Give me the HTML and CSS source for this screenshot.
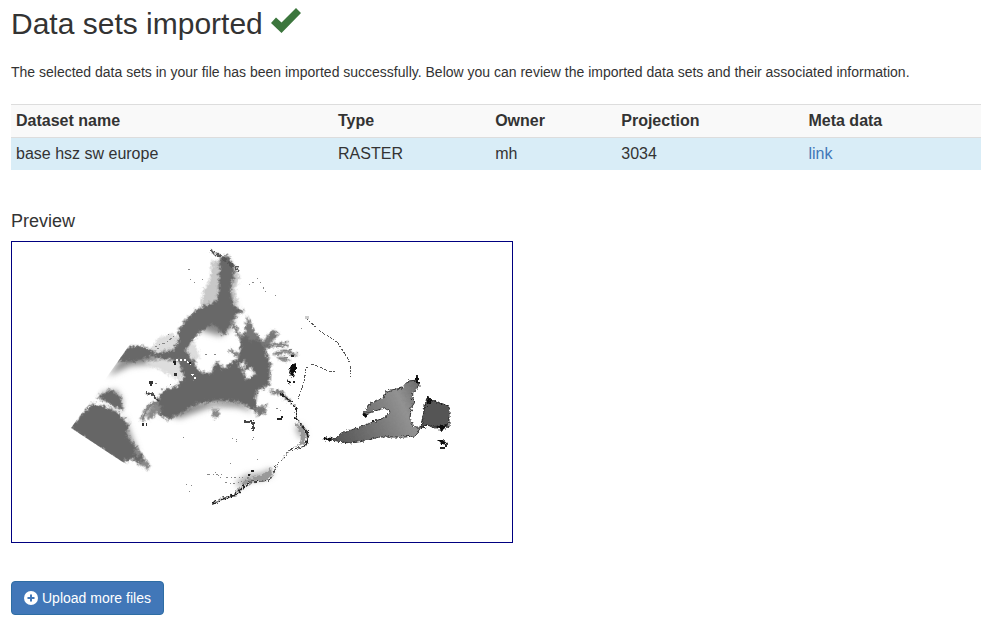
FILE: index.html
```html
<!DOCTYPE html>
<html lang="en">
<head>
<meta charset="utf-8">
<title>Data sets imported</title>
<link rel="stylesheet" href="styles.css">
</head>
<body>
<main class="page">
  <h1 class="title">Data sets imported
    <svg class="check" viewBox="0 0 30 26" aria-hidden="true"><path d="M0 15 5 9.500 10.500 14.500 25 0 30 5 10.500 25Z"/></svg>
  </h1>
  <p class="intro">The selected data sets in your file has been imported successfully. Below you can review the imported data sets and their associated information.</p>
  <table class="datasets">
    <thead>
      <tr><th class="col-name">Dataset name</th><th class="col-type">Type</th><th class="col-owner">Owner</th><th class="col-projection">Projection</th><th>Meta data</th></tr>
    </thead>
    <tbody>
      <tr><td>base hsz sw europe</td><td>RASTER</td><td>mh</td><td>3034</td><td><a href="#">link</a></td></tr>
    </tbody>
  </table>
  <h2 class="subtitle">Preview</h2>
  <svg class="preview" viewBox="12 242 500 300" role="img" aria-label="Raster preview">
    <defs>
      <filter id="rough" x="-5%" y="-5%" width="110%" height="110%"><feGaussianBlur stdDeviation=".8" result="b"/><feTurbulence type="fractalNoise" baseFrequency=".3" numOctaves="2" seed="4" result="n"/><feDisplacementMap in="b" in2="n" scale="6" xChannelSelector="R" yChannelSelector="G"/></filter>
      <filter id="soft" x="-20%" y="-20%" width="140%" height="140%"><feGaussianBlur stdDeviation="3"/></filter>
      <filter id="edge" x="-5%" y="-5%" width="110%" height="110%"><feTurbulence type="fractalNoise" baseFrequency=".4" numOctaves="2" seed="8" result="n"/><feDisplacementMap in="SourceGraphic" in2="n" scale="5" xChannelSelector="R" yChannelSelector="G"/></filter>
      <linearGradient id="island" x1="330" y1="435" x2="425" y2="390" gradientUnits="userSpaceOnUse"><stop offset="0" stop-color="#555"/><stop offset=".45" stop-color="#777"/><stop offset=".75" stop-color="#929292"/><stop offset="1" stop-color="#666"/></linearGradient>
      <clipPath id="extent"><path d="M71 428 128 347 209 246H512V542H260L121 461Z"/></clipPath>
    </defs>
    <g clip-path="url(#extent)">
      <g filter="url(#soft)" fill="#888">
        <path d="M108 376 128 349 162 356 180 345 190 365 160 363 130 366Z"/>
        <path d="M159 413 197 402 240 399 253 412 238 407 213 406 180 418Z"/>
        <path d="M212 303H236L231 328 220 336 200 330ZM124 416 138 454 121 446ZM100 394 116 390 122 400 120 414Z"/>
      </g>
      <g filter="url(#rough)">
        <path fill="#c8c8c8" d="M212 260 223 262 222 299 201 306 204 289 210 280ZM230 268 240 275 235 291 238 304 227 305Z"/>
        <path fill="#ddd" d="M158 338 173 333 183 340 178 348 163 352 150 351ZM183 350 195 342 200 358 190 364ZM144 363 162 359 178 362 184 370 180 381 160 370Z"/>
        <path fill="#666" d="M69 428 92 403 106 406 119 411 129 422 127 436 134 444 141 452 149 466 140 465 132 459 121 463Z"/>
        <path fill="#686868" d="M97 397 110 389 121 397 123 413 109 406Z"/>
        <path fill="#686868" d="M117 361 128 346 142 346 158 353 173 349 178 342 178 331 186 319 200 307 216 301 218 292 220 256 229 256 235 270 231 290 234 306 242 310 235 317 224 336 214 324 203 330 194 339 186 350 194 362 196 374 184 378 178 360 161 359 151 356 134 362Z"/>
        <path fill="#666" d="M157 412 158 400 163 390 177 386 184 377 182 367 193 358 197 368 203 373 211 373 216 361 224 368 232 362 238 358 240 347 243 333 256 333 265 345 267 354 271 364 269 386 258 390 256 400 257 412 246 406 238 402 217 401 197 404 180 414 168 420Z"/>
        <path fill="#777" d="M247 315 254 330 258 339 249 341 245 330ZM262 341 273 330 279 334 270 344 263 349ZM257 407 267 405 266 413 256 417Z"/>
        <path fill="#fff" d="M238 364 245 361 244 369ZM243 372 251 368 255 374 247 379Z"/>
        <path fill="none" stroke="#666" stroke-width="3" d="M265 347 274 345 288 344M274 354 285 351 297 355M279 358 289 360M233 323 240 337 244 347M270 391 281 393 289 401M142 421 146 410 151 405 160 400M234 310 243 312M230 350 238 356"/>
        <path fill="#888" d="M211 409H220L218 418H213ZM133 449 141 451 138 458ZM139 461 146 459 151 467 146 470ZM146 415 156 402 162 408 150 420Z"/>
      </g>
      <path d="M92 401 106 404 121 412 129 423" fill="none" stroke="#fff" stroke-width="3" filter="url(#rough)"/>
      <path filter="url(#edge)" fill="none" stroke="#555" stroke-width="3" stroke-dasharray="5 1 8 1" d="M210 250 222 258 236 268 238 272"/>
      <path filter="url(#edge)" fill="none" stroke="#444" stroke-width="2" d="M145 393 152 394 158 400M244 422H253V430"/>
    </g>
    <g filter="url(#soft)">
      <path fill="none" stroke="#999" stroke-width="6" d="M298 426 303 437M272 471 263 476 248 478 238 485"/>
    </g>
    <g filter="url(#edge)">
      <path fill="#999" d="M294 422 301 426 306 434 304 444 293 447 300 444 301 434ZM212 502 234 494 244 481 254 477 265 474 271 467 272 475 266 480 250 481 242 486 235 494 223 498Z"/>
      <path fill="none" stroke="#222" stroke-width="2" stroke-dasharray="5 1 3 1" d="M281 394 290 401 296 408 296 419 302 425M212 504 222 499 236 495 242 488 250 483"/>
      <path fill="none" stroke="#222" stroke-width="2" d="M302 426 307 432 308 440 305 446"/>
      <path fill="none" stroke="#333" d="M305 446 290 450 284 457 276 466 274 473 271 479 264 481 249 482"/>
      <path fill="url(#island)" stroke="#333" d="M324 439 334 439 343 432 358 428 373 422 386 417 390 411 384 408 372 412 363 414 370 404 384 397 386 391 402 388 408 381 418 380 419 386 413 393 412 399 415 402 411 408 410 419 414 427 421 427 415 436 404 437 380 437 365 441 350 443Z"/>
      <path fill="#555" stroke="#222" d="M427 397 434 401 449 406 449 427 434 428 428 425 421 428 424 410Z"/>
      <path fill="#111" d="M291 365 296 363 296 370 293 377 289 373ZM287 379 291 382 290 385ZM323 437 332 438 330 441 324 440ZM416 377H419V383H416ZM363 413 369 414 364 417ZM437 440 443 440 449 445 441 444ZM427 397 433 401 427 406ZM435 427 447 424 443 431Z"/>
    </g>
    <g fill="none" shape-rendering="crispEdges">
      <path stroke="#ccc" stroke-width="3" d="M305 317h4"/>
      <path stroke="#555" stroke-dasharray="2 1 1 2 3 1" d="M307 319 320 331 337 342 347 357 351 366 350 377M306 368 312 364 320 367 328 371 336 371M306 369 304 382 298 399"/>
      <path stroke="#888" stroke-dasharray="2 3 1 2" d="M207 475 215 472 221 478M225 482 234 484 245 481 252 473M208 474 223 475M226 478 243 477M232 438 237 442 235 436M276 408 283 412M188 269l5 1M190 279l5 4M257 278l4 5M263 287l3 6M155 347 168 341 176 335M150 352 162 347"/>
      <path stroke="#222" stroke-width="2" d="M251 471h3M248 475h2M277 419h5M281 417h2M173 362h3M174 364h2M189 363h2M440 448h5M445 446h2M293 382h2M291 356h3M372 421h2M416 376h2"/>
      <path stroke="#888" d="M202 279h1M189 491h1M186 484h1M230 463h1M252 439h1M253 437h1M257 459h1M301 328h1M275 295h1M252 282h2M249 284h1M183 437h1M205 354h2M214 354h2M193 380h1M152 411h2M156 409h2M155 383h2M170 384h1M164 343h1M171 338h1M168 334h1M191 485h1M289 349h3M277 346h4M284 357h4"/>
      <path stroke="#333" stroke-width="3" d="M149 382h4M150 384h2M142 424h2M146 424h1M174 374h3"/>
      <path stroke="#fff" stroke-width="2" stroke-dasharray="2 2" d="M176 360 186 360 190 365M192 374 197 380M144 426h4"/>
    </g>
  </svg>
  <button class="upload" type="button">
    <svg class="plus" viewBox="0 0 14 14" aria-hidden="true"><circle cx="7" cy="7" r="7"/><path d="M7 3.500v7M3.500 7h7"/></svg>
    Upload more files
  </button>
</main>
</body>
</html>
```
FILE: styles.css
```css
* { box-sizing: border-box; }
body {
  margin: 0;
  background: #fff;
  color: #333;
  font: 14px/20px "Liberation Sans", Arial, sans-serif;
}
.page { padding: 7px 13px 16px 11px; }
.title {
  margin: 0 0 22px;
  font-size: 30px;
  font-weight: 400;
  line-height: 33px;
}
.check { width: 30px; height: 26px; fill: #3c763d; }
.intro { margin: 0 0 22px; }
.datasets {
  width: 100%;
  margin-bottom: 41px;
  border-collapse: separate;
  border-spacing: 0;
  table-layout: fixed;
  font-size: 16px;
  line-height: 22px;
}
.datasets th, .datasets td {
  padding: 5px;
  border-top: 1px solid #ddd;
  text-align: left;
}
.datasets th { background: #f9f9f9; }
.datasets td { background: #d9edf7; }
.col-name { width: 33.2%; }
.col-type { width: 16.2%; }
.col-owner { width: 13%; }
.col-projection { width: 19.3%; }
a { color: #4177b8; text-decoration: none; }
.subtitle {
  margin: 0 0 10px;
  font-size: 18px;
  font-weight: 400;
  line-height: 20px;
}
.preview {
  display: block;
  width: 100%;
  max-width: 502px;
  margin-bottom: 38px;
  border: 1px solid #000080;
}
.upload {
  display: flex;
  align-items: center;
  gap: 4px;
  padding: 6px 12px;
  border: 1px solid #2e6da4;
  border-radius: 4px;
  background: #4177b8;
  color: #fff;
  font: inherit;
}
.plus { width: 14px; height: 14px; fill: #fff; stroke: #4177b8; stroke-width: 2; }
.plus circle { stroke: none; }
```
